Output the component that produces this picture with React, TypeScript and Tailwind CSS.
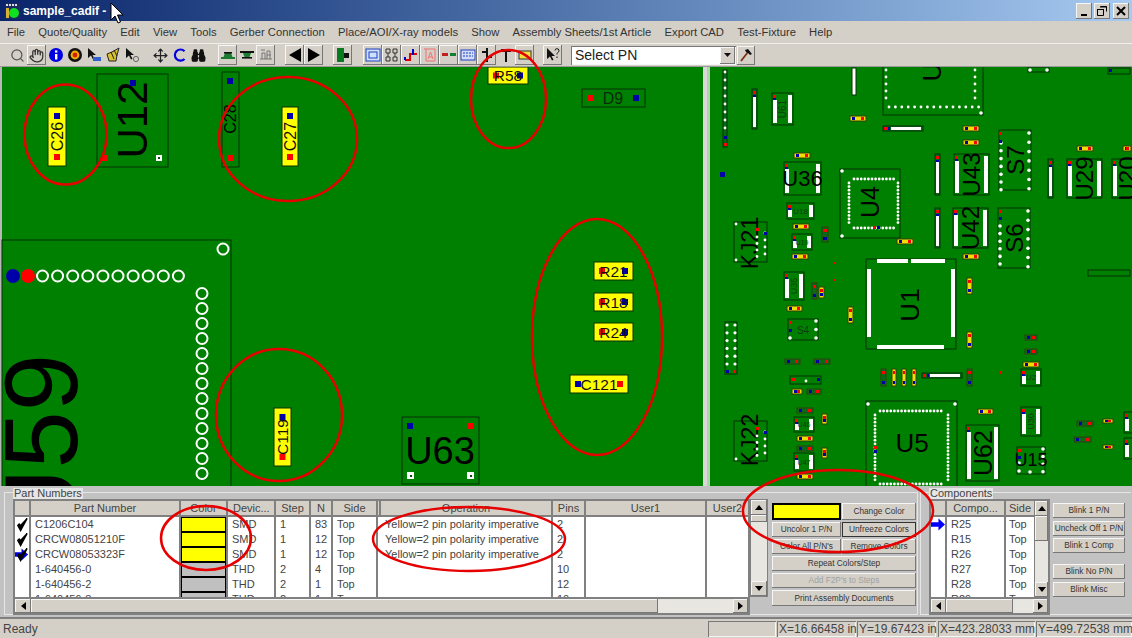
import type { ReactNode } from "react";
import { Hand, Search, Move, Binoculars } from "lucide-react";

const RAISED = "shadow-[inset_-1px_-1px_0_#777777,inset_1px_1px_0_#f6f6f6]";
const SUNKEN = "shadow-[inset_1px_1px_0_#777777,inset_-1px_-1px_0_#f6f6f6]";

const MENU = ["File", "Quote/Quality", "Edit", "View", "Tools", "Gerber Connection", "Place/AOI/X-ray models", "Show", "Assembly Sheets/1st Article", "Export CAD", "Test-Fixture", "Help"];

const ROWS = [
  { pn: "C1206C104", color: "bg-[#ffff00]", dev: "SMD", step: "1", n: "83", op: "Yellow=2 pin polarity imperative", pins: "2" },
  { pn: "CRCW08051210F", color: "bg-[#ffff00]", dev: "SMD", step: "1", n: "12", op: "Yellow=2 pin polarity imperative", pins: "2" },
  { pn: "CRCW08053323F", color: "bg-[#ffff00]", dev: "SMD", step: "1", n: "12", op: "Yellow=2 pin polarity imperative", pins: "2" },
  { pn: "1-640456-0", color: "bg-[#c0c0c0]", dev: "THD", step: "2", n: "4", op: "", pins: "10" },
  { pn: "1-640456-2", color: "bg-[#c0c0c0]", dev: "THD", step: "2", n: "1", op: "", pins: "12" },
  { pn: "1-640456-8", color: "bg-[#c0c0c0]", dev: "THD", step: "2", n: "1", op: "", pins: "10" },
];

const COMPONENTS = ["R25", "R15", "R26", "R27", "R28", "R29"];

const COLS = "grid grid-cols-[16px_150px_47px_48px_35px_22px_45px_3px_172px_33px_121px_43px]";

const TB = ({ pressed, children }: { pressed?: boolean; children: ReactNode }) => (
  <div className={`flex h-[20px] w-[19px] items-center justify-center ${pressed ? RAISED : ""}`}>{children}</div>
);

const Ico = ({ children }: { children: ReactNode }) => (
  <svg width="16" height="16" viewBox="0 0 16 16">{children}</svg>
);

const Toolbar = () => (
  <div className="flex h-[23px] items-center border-t border-[#f2f0ea] pl-[8px]">
    <div className="flex">
      <TB><Search size={15} color="#555" /></TB>
      <TB pressed><Hand size={15} color="#333" /></TB>
      <TB><Ico><circle cx="8" cy="8" r="7" fill="#0000e0" /><rect x="7" y="7" width="2.4" height="5.5" fill="#fff" /><rect x="7" y="3.4" width="2.4" height="2.2" fill="#fff" /></Ico></TB>
      <TB><Ico><circle cx="8" cy="8" r="7" fill="#111" /><circle cx="8" cy="8" r="4.4" fill="#f4b000" /><circle cx="8" cy="8" r="2.4" fill="#d02000" /></Ico></TB>
      <TB><Ico><path d="M2 1v10l3-2.5 2 4 1.5-.8-2-3.8h3.5z" fill="#111" /><rect x="7" y="10" width="8" height="4" fill="#3060d0" /></Ico></TB>
      <TB><Ico><path d="M2 7l5-2 7-4-2 7-1 6H4z" fill="#d8c030" stroke="#222" strokeWidth="1" /><path d="M6 5l3 7M9 3l3 6" stroke="#222" /></Ico></TB>
      <TB><Ico><path d="M2 1v10l3-2.5 2 4 1.5-.8-2-3.8h3.5z" fill="#111" /><circle cx="12" cy="12" r="2.6" fill="none" stroke="#666" /></Ico></TB>
    </div>
    <div className="ml-[10px] flex">
      <TB><Move size={15} color="#222" /></TB>
      <TB><Ico><path d="M12.5 4.2A5.6 5.6 0 1 0 12.5 12" fill="none" stroke="#0000e0" strokeWidth="2.2" /></Ico></TB>
      <TB><Binoculars size={15} color="#111" fill="#111" /></TB>
    </div>
    <div className="ml-[10px] flex">
      <TB pressed><Ico><path d="M1 10h14v2H1zM5 6h6l1.500 4h-9z" fill="#1a7a30" /><rect x="4" y="5" width="8" height="1.600" fill="#111" /></Ico></TB>
      <TB><Ico><path d="M1 4h14v2H1z" fill="#111" /><path d="M4 6h8l-1.500 4h-5z" fill="#1a7a30" /><rect x="3" y="10" width="10" height="1.600" fill="#111" /></Ico></TB>
      <TB pressed><Ico><path d="M2 12h12M4 12V6h3v6M9 12V4h3v8M3 3h4M9 8h4" stroke="#777" fill="none" /></Ico></TB>
    </div>
    <div className="ml-[10px] flex">
      <TB pressed><svg width="14" height="14" viewBox="0 0 14 14"><path d="M13 0v14L1 7z" fill="#000" /></svg></TB>
      <TB pressed><svg width="14" height="14" viewBox="0 0 14 14"><path d="M1 0v14l12-7z" fill="#000" /></svg></TB>
    </div>
    <div className="ml-[10px] flex">
      <TB pressed><Ico><path d="M2 1h7v5h5v5H9v4H2z" fill="#0a7a20" /><rect x="9" y="6" width="5" height="5" fill="#111" /></Ico></TB>
    </div>
    <div className="ml-[11px] flex">
      <TB pressed><Ico><rect x="1" y="2" width="14" height="12" fill="#cfe0fb" stroke="#2040c0" /><rect x="4" y="5" width="8" height="6" fill="none" stroke="#2040c0" /></Ico></TB>
      <TB pressed><Ico><path d="M2 2h4v4H2zM9 2h4v4H9zM2 10h4v4H2zM9 10h4v4H9zM4 6v4M11 6v4" fill="none" stroke="#333" /></Ico></TB>
      <TB pressed><Ico><path d="M2 13h5V7h7" fill="none" stroke="#e00000" strokeWidth="2" /><path d="M10 2v6" stroke="#0000d0" strokeWidth="2" /><path d="M2 13v-3" stroke="#0000d0" strokeWidth="2" /></Ico></TB>
      <TB pressed><Ico><path d="M2 2h11M4 2v12h9V2M6 12l2.500-7 2.500 7M7 10h3" fill="none" stroke="#f07070" /></Ico></TB>
      <TB pressed><Ico><rect x="1" y="6" width="6" height="3" fill="#c02020" /><rect x="9" y="6" width="6" height="3" fill="#108030" /></Ico></TB>
      <TB pressed><Ico><rect x="1" y="3" width="14" height="10" fill="#d0dcf8" stroke="#2040c0" /><path d="M3 6h10M3 9h10" stroke="#2040c0" strokeDasharray="2 1" /></Ico></TB>
      <TB pressed><Ico><path d="M8 1v14M3 5h5M8 10h5" stroke="#111" strokeWidth="2" /></Ico></TB>
      <TB><Ico><path d="M8 4v11" stroke="#111" strokeWidth="2" /><path d="M3 2h10v3H3z" fill="#111" /></Ico></TB>
      <TB pressed><Ico><rect x="2" y="4" width="12" height="8" fill="#f0e040" stroke="#333" /></Ico></TB>
    </div>
    <div className="ml-[9px] flex">
      <TB pressed><Ico><path d="M2 1v11l3-2.500 2 4 1.500-.8-2-3.700h3.500z" fill="#111" /><path d="M10 3.500a2 2 0 1 1 2.800 2c-.8.5-.8 1-.8 2M12 9.500v1.500" stroke="#111" fill="none" /></Ico></TB>
    </div>
    <div className={`ml-[9px] flex h-[19px] w-[165px] items-center bg-white ${SUNKEN}`}>
      <span className="flex-1 pl-[4px] text-[14px] leading-none text-[#222]">Select PN</span>
      <div className={`mr-[1px] flex h-[17px] w-[15px] items-center justify-center bg-[#d4d0c8] ${RAISED}`}>
        <svg width="7" height="4" viewBox="0 0 7 4"><path d="M0 0h7L3.500 4z" fill="#111" /></svg>
      </div>
    </div>
    <div className={`ml-[1px] flex h-[19px] w-[18px] items-center justify-center ${RAISED}`}>
      <svg width="14" height="14" viewBox="0 0 14 14"><path d="M2 13L9 4" stroke="#7a3010" strokeWidth="1.800" /><path d="M6 2l3-1 4 5-2 1-2-2-2-1z" fill="#111" /></svg>
    </div>
  </div>
);

const red = "#ff0000";
const blue = "#0000a8";
const edge = "#043006";

const Sq = ({ x, y, s = 6, fill }: { x: number; y: number; s?: number; fill: string }) => (
  <rect x={x} y={y} width={s} height={s} fill={fill} />
);

const Txt = ({ x, y, size, rot, fill = "#000", children }: { x: number; y: number; size: number; rot?: boolean; fill?: string; children: ReactNode }) => (
  <text x={x} y={y} fontSize={size} fill={fill} textAnchor="middle" dominantBaseline="central" transform={rot ? `rotate(-90 ${x} ${y})` : undefined}>
    {children}
  </text>
);

// big yellow passive, pads at each end
const Yel = ({ x, y, w, h, label, size = 15.500, flip }: { x: number; y: number; w: number; h: number; label: string; size?: number; flip?: boolean }) => {
  const vert = h > w;
  const cx = x + w / 2;
  const cy = y + h / 2;
  const a = flip ? blue : red;
  const b = flip ? red : blue;
  return (
    <g>
      <rect x={x} y={y} width={w} height={h} fill="#ffff00" stroke={edge} />
      {vert ? (
        <>
          <Sq x={cx - 3} y={y + 6} fill={blue} />
          <Sq x={cx - 3} y={y + h - 12} fill={red} />
        </>
      ) : (
        <>
          <Sq x={x + 5} y={cy - 3} fill={a} />
          <Sq x={x + w - 11} y={cy - 3} fill={b} />
        </>
      )}
      <Txt x={cx} y={cy} size={size} rot={vert} fill="#111">{label}</Txt>
    </g>
  );
};

// tiny passive on the right hand board
const Tiny = ({ x, y, w, h, yellow }: { x: number; y: number; w: number; h: number; yellow?: boolean }) => {
  const vert = h > w;
  return (
    <g>
      <rect x={x} y={y} width={w} height={h} fill={yellow ? "#f0e000" : "#0a6a18"} stroke="#304010" />
      {vert ? (
        <>
          <rect x={x + 1} y={y + 2} width={w - 2} height={3} fill={red} />
          <rect x={x + 1} y={y + h - 5} width={w - 2} height={3} fill={blue} />
        </>
      ) : (
        <>
          <rect x={x + 2} y={y + 1} width={3} height={h - 2} fill={blue} />
          <rect x={x + w - 5} y={y + 1} width={3} height={h - 2} fill={red} />
        </>
      )}
    </g>
  );
};

// strip of white pads with the red/blue pins at the top
const Strip = ({ x, y, w, h }: { x: number; y: number; w: number; h: number }) => {
  const vert = h > w;
  return (
    <g>
      <rect x={x} y={y} width={w} height={h} fill="#0a6a18" stroke={edge} />
      {vert ? (
        <>
          <rect x={x + 1} y={y + 8} width={w - 2} height={h - 10} fill="#fff" />
          <rect x={x + 1} y={y + 2} width={w - 2} height={3} fill={red} />
          <rect x={x + 1} y={y + 6} width={w - 2} height={2} fill={blue} />
        </>
      ) : (
        <>
          <rect x={x + 8} y={y + 1} width={w - 10} height={h - 2} fill="#fff" />
          <rect x={x + 1} y={y + 1} width={3} height={h - 2} fill={red} />
          <rect x={x + 5} y={y + 1} width={2} height={h - 2} fill={blue} />
        </>
      )}
    </g>
  );
};

const Chip = ({ x, y, w, h, label, size, rot = true, fill = "#000" }: { x: number; y: number; w: number; h: number; label: string; size: number; rot?: boolean; fill?: string }) => (
  <g>
    <rect x={x} y={y} width={w} height={h} fill="none" stroke={edge} />
    <rect x={x + 1} y={y + 7} width={4} height={h - 9} fill="#fff" />
    <rect x={x + w - 5} y={y + 2} width={4} height={h - 4} fill="#fff" />
    <rect x={x + 1} y={y + 2} width={3} height={3} fill={red} />
    <rect x={x + 1} y={y + 5} width={3} height={2} fill={blue} />
    <Txt x={x + w / 2} y={y + h / 2} size={size} rot={rot} fill={fill}>{label}</Txt>
  </g>
);

const dots = (x0: number, y0: number, dx: number, dy: number, n: number, r = 1.4) =>
  Array.from({ length: n }, (_, i) => <circle key={`${x0}-${y0}-${i}`} cx={x0 + dx * i} cy={y0 + dy * i} r={r} fill="#fff" />);

const TINY: [number, number, number, number, boolean][] = [
  [850, 116, 16, 5, true], [963, 126, 16, 5, true], [963, 140, 16, 5, true], [794, 153, 16, 5, true],
  [1077, 146, 16, 5, true], [1123, 146, 8, 5, true], [793, 224, 16, 5, true], [897, 239, 16, 5, true],
  [792, 254, 16, 5, true], [963, 254, 16, 5, true], [822, 227, 6, 15, false], [812, 283, 5, 16, false],
  [819, 287, 5, 11, true], [967, 278, 5, 16, true], [787, 306, 15, 5, true], [848, 307, 5, 16, true],
  [967, 332, 5, 16, true], [1025, 335, 12, 5, false], [1025, 349, 12, 5, false], [1023, 362, 16, 5, true],
  [785, 359, 15, 5, false], [814, 359, 16, 5, false], [792, 389, 10, 5, true], [807, 389, 14, 5, false],
  [881, 369, 5, 17, false], [892, 369, 4, 17, true], [902, 369, 4, 17, true], [912, 369, 4, 17, true],
  [967, 369, 5, 17, false], [978, 409, 15, 5, true], [1077, 421, 16, 5, false], [1103, 419, 10, 4, true],
  [1074, 437, 17, 5, false], [1103, 445, 10, 4, true], [797, 408, 16, 5, false], [822, 414, 5, 10, true],
  [797, 436, 16, 5, true], [797, 446, 16, 5, false], [822, 448, 5, 10, true], [797, 474, 16, 5, true],
];

const Board = () => (
  <svg width="1132" height="420" viewBox="0 67 1132 420" className="block">
    <rect x="0" y="67" width="1132" height="420" fill="#008000" />
    <rect x="0" y="67" width="2" height="420" fill="#b8b8b8" />
    <rect x="703" y="67" width="4" height="420" fill="#d8d8d8" />
    <rect x="707" y="67" width="3" height="420" fill="#a8d8a8" />

    {/* left side */}
    <Yel x={48} y={107} w={18} h={59} label="C26" size={16} />
    <rect x="97" y="74" width="71" height="93" fill="none" stroke={edge} />
    <Txt x={132} y={120} size={42} rot>U12</Txt>
    <Sq x={130} y={80} fill={blue} />
    <Sq x={102} y={155} fill={red} />
    <rect x="156" y="155" width="6" height="6" fill="#fff" />
    <rect x="158" y="157" width="2" height="2" fill="#0c4a10" />
    <rect x="222" y="72" width="17" height="95" fill="none" stroke={edge} />
    <Sq x={227} y={78} fill={blue} />
    <Sq x={227} y={155} fill={red} />
    <Txt x={230} y={119} size={16} rot>C28</Txt>
    <Yel x={282} y={107} w={16} h={59} label="C27" size={16} />

    <rect x="2" y="240" width="229" height="250" fill="none" stroke={edge} />
    <circle cx="223" cy="249" r="5.500" fill="none" stroke="#fff" strokeWidth="2" />
    <circle cx="13" cy="276" r="7" fill={blue} />
    <circle cx="28" cy="276" r="7" fill={red} />
    {Array.from({ length: 10 }, (_, i) => (
      <circle key={i} cx={42.500 + i * 15.100} cy="276" r="5.500" fill="none" stroke="#fff" strokeWidth="2" />
    ))}
    {Array.from({ length: 13 }, (_, i) => (
      <circle key={i} cx="202" cy={293.500 + i * 15} r="5.500" fill="none" stroke="#fff" strokeWidth="2" />
    ))}
    <text x="77" y="358" fontSize="103" fill="#000" textAnchor="start" transform="rotate(-90 77 358)" dx="-185">U59</text>
    <Yel x={274} y={408} w={17} h={58} label="C119" />

    {/* middle */}
    <Yel x={488} y={67} w={40} h={17} label="R58" />
    <rect x="582" y="89" width="63" height="18" fill="none" stroke={edge} />
    <Sq x={587} y={95} fill={red} />
    <Sq x={633} y={95} fill={blue} />
    <Txt x={613} y={98} size={16} fill="#0b2a0b">D9</Txt>
    <Yel x={594} y={262} w={39} h={18} label="R21" />
    <Yel x={594} y={293} w={39} h={18} label="R18" />
    <Yel x={594} y={323} w={39} h={18} label="R24" />
    <Yel x={570} y={375} w={58} h={18} label="C121" flip />
    <rect x="402" y="417" width="77" height="67" fill="none" stroke={edge} />
    <Sq x={407} y={423} fill={blue} />
    <Sq x={467} y={423} fill={red} />
    <rect x="407" y="472" width="7" height="7" fill="#fff" />
    <rect x="467" y="472" width="7" height="7" fill="#fff" />
    <rect x="410" y="475" width="2" height="2" fill="#0c4a10" />
    <rect x="470" y="475" width="2" height="2" fill="#0c4a10" />
    <Txt x={440} y={451} size={38}>U63</Txt>

    {/* right side */}
    <rect x="723" y="70" width="4" height="77" fill="#0a6a18" stroke={edge} />
    {dots(725, 72, 0, 8, 8)}
    <rect x="724" y="136" width="3" height="3" fill={blue} />
    <rect x="724" y="143" width="3" height="3" fill={red} />
    <Strip x={752} y={89} w={5} h={40} />
    <Chip x={772} y={93} w={21} h={32} label="U61" size={10} fill="#143a14" />
    <rect x="852" y="68" width="4" height="27" fill="#fff" stroke={edge} />

    <rect x="883" y="62" width="100" height="53" fill="none" stroke={edge} />
    {dots(886, 70, 0, 7, 5)}
    {dots(975, 70, 0, 7, 5)}
    {dots(889, 107, 6.400, 0, 15)}
    <circle cx="981" cy="113" r="1.800" fill="#fff" />
    <Txt x={932} y={72} size={26} rot>U</Txt>
    <rect x="1028" y="67" width="21" height="5" fill="none" stroke={edge} />
    {dots(1030, 70, 17, 0, 2, 1.800)}
    <rect x="1108" y="68" width="22" height="6" fill="none" stroke={edge} />
    <rect x="1109" y="69" width="3" height="3" fill={blue} />

    <Strip x={883} y={126} w={40} h={5} />
    <Chip x={784} y={162} w={37} h={33} label="U36" size={22} rot={false} />
    <Sq x={720} y={172} s={5} fill={blue} />

    <rect x="840" y="169" width="60" height="69" fill="none" stroke={edge} />
    <circle cx="842" cy="171" r="1.800" fill="#fff" />
    <circle cx="842" cy="236" r="1.800" fill="#fff" />
    {dots(854, 179, 3.600, 0, 12)}
    {dots(854, 228, 3.600, 0, 12)}
    {dots(849, 183, 0, 3.600, 12)}
    {dots(898, 183, 0, 3.600, 12)}
    <Sq x={873} y={226} s={3} fill={red} />
    <Sq x={877} y={226} s={3} fill={blue} />
    <Txt x={870} y={202} size={25} rot>U4</Txt>

    <Strip x={935} y={154} w={5} h={41} />
    <Chip x={954} y={154} w={35} h={41} label="U43" size={24} />
    <Strip x={935} y={208} w={5} h={40} />
    <Chip x={953} y={208} w={35} h={40} label="U42" size={24} />
    <Strip x={1048} y={159} w={5} h={39} />
    <Chip x={1067} y={159} w={35} h={39} label="U29" size={24} />
    <Chip x={1112} y={159} w={30} h={39} label="U20" size={24} />

    <rect x="999" y="130" width="32" height="60" fill="none" stroke={edge} />
    {dots(1001, 143, 0, 7.800, 7, 1.800)}
    {dots(1029, 133, 0, 9.300, 7, 1.800)}
    <Sq x={999} y={132} s={3} fill={red} />
    <Sq x={999} y={140} s={3} fill={blue} />
    <Txt x={1015} y={160} size={24} rot>S7</Txt>
    <rect x="998" y="208" width="32" height="60" fill="none" stroke={edge} />
    {dots(1000, 226, 0, 7.600, 6, 1.800)}
    {dots(1028, 211, 0, 9.300, 7, 1.800)}
    <Sq x={999} y={210} s={3} fill={red} />
    <Sq x={999} y={217} s={3} fill={blue} />
    <Txt x={1014} y={238} size={24} rot>S6</Txt>

    <Chip x={787} y={203} w={27} h={16} label="U18" size={8} rot={false} fill="#143a14" />
    <Chip x={792} y={234} w={20} h={16} label="U19" size={7} rot={false} fill="#143a14" />

    <rect x="734" y="222" width="33" height="40" fill="none" stroke={edge} />
    <Txt x={750} y={243} size={23} rot>KJ21</Txt>
    {dots(736, 224, 0, 0, 1)}
    {dots(736, 260, 0, 0, 1)}
    {dots(765, 233, 0, 7, 4)}
    {dots(757, 237, 0, 6.500, 4)}
    <Sq x={756} y={228} s={3} fill={red} />
    <Sq x={764} y={232} s={3} fill={blue} />

    <rect x="834" y="262" width="2" height="2" fill={red} />
    <rect x="834" y="279" width="2" height="2" fill={red} />
    <rect x="999" y="371" width="3" height="3" fill={red} />

    <rect x="866" y="259" width="90" height="90" fill="none" stroke={edge} />
    <rect x="877" y="259" width="31" height="4" fill="#fff" />
    <rect x="911" y="259" width="34" height="4" fill="#fff" />
    <rect x="867" y="269" width="4" height="68" fill="#fff" />
    <rect x="951" y="269" width="4" height="68" fill="#fff" />
    <rect x="877" y="345" width="67" height="4" fill="#fff" />
    <Txt x={910} y={305} size={26} rot>U1</Txt>

    <rect x="1088" y="270" width="42" height="6" fill="none" stroke={edge} />
    <Chip x={784} y={272} w={20} h={28} label="U35" size={9} fill="#143a14" />

    <rect x="725" y="322" width="12" height="52" fill="none" stroke={edge} />
    {dots(727, 325, 0, 7.800, 6, 1.600)}
    {dots(735, 325, 0, 7.800, 6, 1.600)}
    <Sq x={726} y={370} s={3} fill={blue} />
    <Sq x={733} y={370} s={3} fill={red} />

    <rect x="788" y="319" width="30" height="21" fill="none" stroke={edge} />
    <Sq x={789} y={321} s={3} fill={red} />
    <Sq x={789} y={329} s={3} fill={blue} />
    {dots(816, 321, 0, 8.500, 3, 1.800)}
    {dots(790, 338, 0, 0, 1, 1.800)}
    <Txt x={803} y={330} size={10} fill="#143a14">S4</Txt>

    <rect x="790" y="376" width="31" height="8" fill="none" stroke={edge} />
    <Sq x={792} y={378} s={3} fill={red} />
    <Sq x={817} y={378} s={3} fill={blue} />
    {dots(806, 381, 0, 0, 1)}

    <Strip x={922} y={373} w={40} h={5} />
    <Chip x={1021} y={369} w={20} h={17} label="U2" size={8} rot={false} fill="#143a14" />

    <rect x="866" y="401" width="91" height="90" fill="none" stroke={edge} />
    <circle cx="868" cy="404" r="1.800" fill="#fff" />
    <circle cx="955" cy="404" r="1.800" fill="#fff" />
    {dots(880, 411, 3.600, 0, 18)}
    {dots(880, 484, 3.600, 0, 18)}
    {dots(875, 415, 0, 3.600, 19)}
    {dots(948, 415, 0, 3.600, 19)}
    <Sq x={874} y={446} s={3} fill={red} />
    <Sq x={874} y={450} s={3} fill={blue} />
    <Txt x={912} y={443} size={26}>U5</Txt>

    <Chip x={1021} y={407} w={20} h={29} label="U30" size={9} fill="#143a14" />
    <Chip x={966} y={425} w={33} h={56} label="U62" size={25} />
    <rect x="1017" y="447" width="28" height="27" fill="none" stroke={edge} />
    <Sq x={1018} y={449} s={3} fill={red} />
    <Sq x={1018} y={456} s={3} fill={blue} />
    {dots(1019, 463, 0, 8, 2, 1.800)}
    {dots(1043, 449, 0, 7.600, 4, 1.800)}
    {dots(1030, 472, 0, 0, 1, 1.800)}
    <Txt x={1031} y={460} size={18}>U15</Txt>

    <rect x="734" y="421" width="33" height="40" fill="none" stroke={edge} />
    <Txt x={750} y={440} size={23} rot>KJ22</Txt>
    {dots(736, 459, 0, 0, 1)}
    {dots(765, 432, 0, 7, 4)}
    {dots(757, 436, 0, 6.500, 4)}
    <Sq x={756} y={427} s={3} fill={red} />
    <Sq x={764} y={431} s={3} fill={blue} />

    <Chip x={794} y={417} w={20} h={15} label="U46" size={7} rot={false} fill="#143a14" />
    <Chip x={794} y={453} w={20} h={18} label="U47" size={7} rot={false} fill="#143a14" />
    <Chip x={1124} y={412} w={20} h={21} label="" size={7} />
    <Chip x={1124} y={438} w={20} h={21} label="" size={7} />

    {TINY.map(([x, y, w, h, yellow], i) => (
      <Tiny key={i} x={x} y={y} w={w} h={h} yellow={yellow} />
    ))}
  </svg>
);

const Check = ({ blueMark }: { blueMark?: boolean }) => (
  <svg width="15" height="15" viewBox="0 0 15 15">
    {blueMark && <path d="M0 5h7V1l7 6.500L7 14v-4H0z" fill="#0000e0" />}
    <path d="M3 8.500l3 5.500L13 1 6 8.500 4.500 7z" fill="#000" stroke="#000" strokeWidth="1.500" />
  </svg>
);

const ScrollBtn = ({ dir, className }: { dir: "up" | "down" | "left" | "right"; className: string }) => {
  const d = { up: "M0 5h8L4 0z", down: "M0 0h8L4 5z", left: "M5 0v8L0 4z", right: "M0 0v8l5-4z" }[dir];
  const size = dir === "up" || dir === "down" ? { w: 8, h: 5 } : { w: 5, h: 8 };
  return (
    <div className={`flex shrink-0 items-center justify-center bg-[#d4d0c8] ${RAISED} ${className}`}>
      <svg width={size.w} height={size.h} viewBox={`0 0 ${size.w} ${size.h}`}><path d={d} fill="#000" /></svg>
    </div>
  );
};

const Hd = ({ children, left }: { children?: ReactNode; left?: boolean }) => (
  <div className={`flex h-[14px] items-center overflow-hidden border-r-2 border-[#808080] bg-[#d4d0c8] text-[11px] text-[#444] ${left ? "pl-[5px]" : "justify-center"}`}>
    {children}
  </div>
);

const Cell = ({ children }: { children?: ReactNode }) => (
  <div className="flex h-[15px] items-center overflow-hidden whitespace-nowrap border-r-2 border-[#808080] bg-white pl-[4px] text-[11px] text-[#444]">{children}</div>
);

const PartsTable = () => (
  <div className="flex h-[116px] w-[737px] flex-col border-2 border-[#808080]">
    <div className={COLS}>
      <Hd />
      <Hd>Part Number</Hd>
      <Hd>Color</Hd>
      <Hd left>Devic...</Hd>
      <Hd>Step</Hd>
      <Hd>N</Hd>
      <Hd>Side</Hd>
      <Hd />
      <Hd>Operation</Hd>
      <Hd>Pins</Hd>
      <Hd>User1</Hd>
      <Hd>User2</Hd>
    </div>
    <div className="h-[82px] overflow-hidden border-t-2 border-[#808080]">
      {ROWS.map((r, i) => (
        <div key={r.pn} className={COLS}>
          <div className="flex h-[15px] items-center justify-center border-r-2 border-[#808080] bg-white">{i < 3 && <Check blueMark={i === 2} />}</div>
          <Cell>{r.pn}</Cell>
          <div className="h-[15px] border-r-2 border-[#808080] bg-white"><div className={`h-full border border-black ${r.color}`} /></div>
          <Cell>{r.dev}</Cell>
          <Cell>{r.step}</Cell>
          <Cell>{r.n}</Cell>
          <Cell>Top</Cell>
          <Cell />
          <Cell>{r.op}</Cell>
          <Cell>{r.pins}</Cell>
          <Cell />
          <Cell />
        </div>
      ))}
    </div>
    <div className="flex h-[16px] border-t-2 border-[#808080] bg-[#d4d0c8]">
      <ScrollBtn dir="left" className="w-[16px]" />
      <div className={`w-[627px] bg-[#d4d0c8] ${RAISED}`} />
      <div className="flex-1 bg-[#e8e6e0]" />
      <ScrollBtn dir="right" className="w-[15px]" />
    </div>
  </div>
);

const PanelBtn = ({ children, className = "", disabled, dark }: { children: ReactNode; className?: string; disabled?: boolean; dark?: boolean }) => (
  <div className={`flex items-center justify-center whitespace-nowrap bg-[#d4d0c8] text-[8.300px] ${disabled ? "text-[#a0a0a0]" : "text-[#333]"} ${dark ? "border border-[#333]" : RAISED} ${className}`}>
    {children}
  </div>
);

const BottomPane = () => (
  <div className="flex h-[131px] bg-[#c2c2c2] pt-[6px]">
    {/* Part numbers group */}
    <div className="relative ml-[4px] flex h-[123px] w-[914px] border border-[#e6e6e6] pl-[8px] pt-[6px]">
      <div className="absolute left-[8px] top-[-5px] bg-[#e6e6e6] px-[1px] text-[11px] leading-[11px] text-[#444]">Part Numbers</div>
      <PartsTable />
      <div className="flex h-[98px] w-[18px] flex-col border border-[#808080] bg-[#e8e6e0]">
        <ScrollBtn dir="up" className="h-[15px]" />
        <div className={`h-[7px] bg-[#d4d0c8] ${RAISED}`} />
        <div className="flex-1" />
        <ScrollBtn dir="down" className="h-[15px]" />
      </div>
      <div className="ml-[4px] flex w-[144px] flex-col gap-[2px] pt-[4px]">
        <div className="flex gap-[1px]">
          <div className="h-[17px] w-[69px] border-2 border-black bg-[#ffff00]" />
          <PanelBtn className="h-[17px] flex-1">Change Color</PanelBtn>
        </div>
        <div className="flex gap-[1px]">
          <PanelBtn className="h-[15px] w-[69px]">Uncolor 1 P/N</PanelBtn>
          <PanelBtn className="h-[15px] flex-1" dark>Unfreeze Colors</PanelBtn>
        </div>
        <div className="flex gap-[1px]">
          <PanelBtn className="h-[15px] w-[69px]">Color All P/N's</PanelBtn>
          <PanelBtn className="h-[15px] flex-1">Remove Colors</PanelBtn>
        </div>
        <PanelBtn className="h-[15px]">Repeat Colors/Step</PanelBtn>
        <PanelBtn className="h-[15px]" disabled>Add F2P's to Steps</PanelBtn>
        <PanelBtn className="h-[16px]">Print Assembly Documents</PanelBtn>
      </div>
    </div>

    {/* Components group */}
    <div className="relative ml-[2px] flex h-[123px] w-[211px] border-y border-l border-[#e6e6e6] pl-[8px] pt-[6px]">
      <div className="absolute left-[8px] top-[-5px] bg-[#e6e6e6] px-[1px] text-[11px] leading-[11px] text-[#444]">Components</div>
      <div className="flex h-[116px] w-[121px] flex-col border-2 border-[#808080]">
        <div className="flex min-h-0 flex-1">
          <div className="flex w-[103px] flex-col overflow-hidden">
            <div className="grid grid-cols-[16px_59px_28px]">
              <Hd />
              <Hd>Compo...</Hd>
              <div className="flex h-[14px] items-center bg-[#d4d0c8] pl-[3px] text-[11px] text-[#444]">Side</div>
            </div>
            <div className="h-[82px] overflow-hidden border-t-2 border-[#808080]">
              {COMPONENTS.map((c, i) => (
                <div key={c} className="grid grid-cols-[16px_59px_28px]">
                  <div className="flex h-[15px] items-center justify-center border-r-2 border-[#808080] bg-white">
                    {i === 0 && <svg width="15" height="13" viewBox="0 0 15 13"><path d="M0 4h8V0l7 6.500L8 13V9H0z" fill="#0000ff" /></svg>}
                  </div>
                  <Cell>{c}</Cell>
                  <div className="flex h-[15px] items-center bg-white pl-[3px] text-[11px] text-[#444]">Top</div>
                </div>
              ))}
            </div>
          </div>
          <div className="flex w-[14px] flex-col border-l border-[#808080] bg-[#e8e6e0]">
            <ScrollBtn dir="up" className="h-[15px]" />
            <div className={`h-[25px] bg-[#d4d0c8] ${RAISED}`} />
            <div className="flex-1" />
            <ScrollBtn dir="down" className="h-[15px]" />
          </div>
        </div>
        <div className="flex h-[16px] shrink-0 border-t-2 border-[#808080] bg-[#d4d0c8]">
          <ScrollBtn dir="left" className="w-[15px]" />
          <div className={`w-[67px] bg-[#d4d0c8] ${RAISED}`} />
          <div className="flex-1 bg-[#e8e6e0]" />
          <ScrollBtn dir="right" className="w-[15px]" />
        </div>
      </div>
      <div className="ml-[3px] flex w-[72px] flex-col pt-[4px]">
        <PanelBtn className="h-[15px]">Blink 1 P/N</PanelBtn>
        <PanelBtn className="mt-[3px] h-[15px]">Uncheck Off 1 P/N</PanelBtn>
        <PanelBtn className="mt-[2px] h-[15px]">Blink 1 Comp</PanelBtn>
        <PanelBtn className="mt-[11px] h-[15px]">Blink No P/N</PanelBtn>
        <PanelBtn className="mt-[3px] h-[15px]">Blink Misc</PanelBtn>
      </div>
    </div>
  </div>
);

const StatusBar = () => (
  <div className="flex h-[20px] items-stretch border-t-2 border-[#808080] bg-[#d4d0c8] pt-[2px] text-[12px] text-[#444]">
    <div className="w-[708px] pl-[3px] leading-[16px]">Ready</div>
    <div className={`w-[68px] ${SUNKEN}`} />
    <div className={`ml-[1px] w-[79px] whitespace-nowrap pl-[2px] leading-[16px] ${SUNKEN}`}>X=16.66458 in</div>
    <div className={`ml-[1px] w-[79px] whitespace-nowrap pl-[2px] leading-[16px] ${SUNKEN}`}>Y=19.67423 in</div>
    <div className={`ml-[2px] w-[97px] whitespace-nowrap pl-[2px] leading-[16px] ${SUNKEN}`}>X=423.28033 mm</div>
    <div className={`ml-[1px] flex-1 overflow-hidden whitespace-nowrap pl-[2px] leading-[16px] ${SUNKEN}`}>Y=499.72538 mm</div>
  </div>
);

export default function App() {
  return (
    <div className="relative flex h-[638px] w-[1132px] flex-col overflow-hidden bg-[#d4d0c8] font-['Liberation_Sans',Arial,sans-serif]">
      {/* title bar */}
      <div className="flex h-[21px] shrink-0 items-center bg-gradient-to-r from-[#0a246a] to-[#a6caf0] pl-[5px] pr-[3px]">
        <svg width="15" height="16" viewBox="0 0 15 16">
          <rect width="15" height="16" fill="#1a2a60" />
          <rect x="1" y="1" width="2" height="2" fill="#e0e0e0" />
          <rect x="4" y="1" width="2" height="2" fill="#e0e0e0" />
          <rect x="7" y="1" width="2" height="2" fill="#e0e0e0" />
          <rect x="10" y="1" width="2" height="2" fill="#e0e0e0" />
          <rect x="1" y="5" width="3" height="10" fill="#d8b030" />
          <circle cx="9" cy="10" r="5" fill="#10e020" />
        </svg>
        <span className="ml-[3px] text-[12px] font-bold text-white">sample_cadif -</span>
        <div className="ml-auto flex gap-[2px]">
          <div className={`flex h-[16px] w-[16px] items-end justify-center bg-[#d4d0c8] pb-[3px] ${RAISED}`}><div className="h-[2px] w-[6px] bg-black" /></div>
          <div className={`flex h-[16px] w-[16px] items-center justify-center bg-[#d4d0c8] ${RAISED}`}>
            <svg width="10" height="10" viewBox="0 0 10 10"><path d="M3.500 .5h6v5M.5 3.500h6v6h-6z" fill="none" stroke="#000" /><path d="M3 1h7M0 3.500h7" stroke="#000" /></svg>
          </div>
          <div className={`ml-[1px] flex h-[16px] w-[16px] items-center justify-center bg-[#d4d0c8] ${RAISED}`}>
            <svg width="10" height="10" viewBox="0 0 10 10"><path d="M1 1l8 8M9 1l-8 8" stroke="#000" strokeWidth="2" /></svg>
          </div>
        </div>
      </div>

      {/* menu */}
      <div className="flex h-[22px] shrink-0 items-center gap-[13.200px] pl-[7px] text-[11.250px] text-[#333]">
        {MENU.map((m) => (
          <span key={m}>{m}</span>
        ))}
      </div>

      <Toolbar />

      <div className="h-[420px] shrink-0 overflow-hidden border-t border-[#9a9a9a]">
        <Board />
      </div>

      <BottomPane />
      <StatusBar />

      {/* hand drawn annotations on top of the screenshot */}
      <svg className="pointer-events-none absolute inset-0" width="1132" height="638" viewBox="0 0 1132 638">
        <g fill="none" stroke="#e60000" strokeWidth="2.500">
          <ellipse cx="65.500" cy="134.500" rx="41" ry="50" />
          <ellipse cx="288" cy="139" rx="69" ry="62" />
          <ellipse cx="508.500" cy="99" rx="37.500" ry="49" />
          <ellipse cx="597" cy="337" rx="65" ry="118" />
          <ellipse cx="279" cy="415" rx="63" ry="66" />
          <ellipse cx="838" cy="511" rx="95" ry="41" />
          <ellipse cx="206" cy="538" rx="45" ry="32" />
          <ellipse cx="469" cy="539" rx="96" ry="32" />
        </g>
        <path d="M111 3v17l4-4 3 7 2.500-1-3-7h5.500z" fill="#fff" stroke="#000" strokeWidth="1" />
      </svg>
    </div>
  );
}
